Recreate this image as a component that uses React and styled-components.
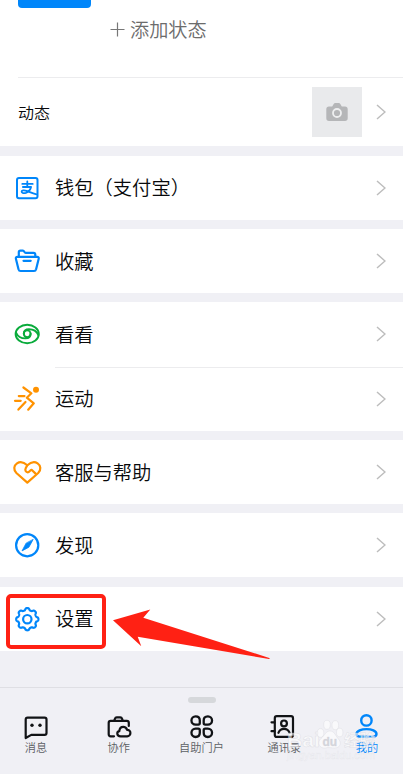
import React from 'react';
import styled, { createGlobalStyle } from 'styled-components';

const blue = '#0086fa';
const orange = '#ff9200';
const green = '#09ab3b';
const red = '#ff2114';
const ink = '#111316';
const grey = '#f0f0f5';

const GlobalStyle = createGlobalStyle`
    * {
        box-sizing: border-box;
    }
    body {
        margin: 0;
        background: ${grey};
        font-family: 'Noto Sans CJK SC', sans-serif;
        font-weight: 350;
        color: #08090b;
    }
`;

const Screen = styled.main`
    width: 403px;
    height: 774px;
    display: flex;
    flex-direction: column;
    overflow: hidden;
    background: ${grey};
`;

const Profile = styled.header`
    display: flex;
    flex: none;
    height: 77px;
    padding-left: 18px;
    background: white;
`;

const Avatar = styled.div`
    width: 73px;
    height: 8px;
    border-radius: 0 0 4px 4px;
    background: ${blue};
`;

const Status = styled.div`
    display: flex;
    align-items: center;
    gap: 5px;
    height: 28px;
    margin: 15px 0 0 19px;
    font-size: 19.2px;
    line-height: 28px;
    color: #6c6c6c;
`;

const Moments = styled.section`
    display: flex;
    flex: none;
    align-items: center;
    height: 69px;
    padding-left: 18px;
    background: linear-gradient(#ececee, #ececee) 18px 0 / 100% 1px no-repeat
        white;
    font-size: 16px;
`;

const Photo = styled.div`
    display: flex;
    align-items: center;
    justify-content: center;
    width: 50px;
    height: 50px;
    margin: 0 14px 0 auto;
    background: #e9eaec;
`;

const Groups = styled.div`
    display: flex;
    flex: 1;
    flex-direction: column;
    gap: 9.2px;
    padding-top: 9.6px;
`;

const Group = styled.section`
    background: white;
`;

const Row = styled.div`
    position: relative;
    display: flex;
    align-items: center;
    height: 64.2px;
    padding-left: 13px;
    font-size: 19.3px;

    & + &::before {
        content: '';
        position: absolute;
        top: 0;
        left: 55px;
        right: 0;
        border-top: 1px solid #ececee;
    }
`;

const RowLabel = styled.span`
    margin-left: 14px;
    margin-right: auto;
    padding-bottom: 1px;
    white-space: nowrap;
`;

const Icon = styled.svg.attrs({ viewBox: '0 0 28 28' })`
    display: block;
    flex: none;
    width: 28px;
    height: 28px;
    fill: none;
    stroke: ${p => p.$color};
    stroke-width: ${p => p.$weight || 2.2};
    stroke-linecap: round;
    stroke-linejoin: round;
    overflow: visible;
`;

const ChevronIcon = styled.svg`
    flex: none;
    width: 10px;
    height: 16px;
    margin-right: 17px;
    fill: none;
    stroke: #bdbdbd;
    stroke-width: 1.5;
`;

const Marker = styled.div`
    position: absolute;
    top: 7px;
    left: 6px;
    width: 100px;
    height: 55px;
    border: 4px solid ${red};
    border-radius: 5px;
`;

const Pointer = styled.svg`
    position: absolute;
    z-index: 1;
    top: 22px;
    left: 113px;
    width: 158px;
    height: 52px;
    fill: ${red};
`;

const TabBar = styled.nav`
    position: relative;
    flex: none;
    height: 87px;
    border-top: 1px solid #dfdfe4;
`;

const Grip = styled.div`
    width: 28px;
    height: 6px;
    margin: 9px auto 0;
    border-radius: 3px;
    background: #d6d8db;
`;

const Tabs = styled.div`
    display: flex;
    justify-content: space-between;
    padding: 10.2px 12px 0;
`;

const Tab = styled.div`
    display: flex;
    flex-direction: column;
    align-items: center;
    width: 48px;
    font-size: 11.2px;
    line-height: 13px;
    white-space: nowrap;
    color: ${p => (p.$active ? blue : '#5c5f64')};
`;

const Watermark = styled.svg`
    position: absolute;
    top: 29px;
    left: 283px;
    width: 96px;
    height: 50px;
    fill: white;
    fill-opacity: 0.6;
    stroke: #d0d1d8;
    stroke-opacity: 0.6;
    stroke-width: 0.5;
    font-family: 'Liberation Sans', 'Noto Sans CJK SC', sans-serif;
`;

const Chevron = () => (
    <ChevronIcon viewBox="0 0 10 16">
        <path d="M1 1l8 7-8 7" />
    </ChevronIcon>
);

// eight soft teeth round a circle
const gearPath = () => {
    const points = [];
    for (let i = 0; i < 160; i++) {
        const a = (i / 160) * Math.PI * 2;
        const wave = Math.cos(8 * a);
        const r = 10.1 + 1.05 * Math.tanh(1.7 * wave);
        points.push(
            `${(14.3 + r * Math.sin(a)).toFixed(2)} ${(
                14.2 -
                r * Math.cos(a)
            ).toFixed(2)}`
        );
    }
    return `M${points.join('L')}Z`;
};

const WalletIcon = () => (
    <Icon $color={blue} $weight={2}>
        <rect x="4" y="4" width="20.5" height="20.3" rx="2" />
        <path
            strokeWidth="1.8"
            d="M9.3 9.9h10.4M14.3 7.5v5.3M9.9 13h8.2c-.8 3-2.8 5-5.2 5.8-2 .6-4.2.3-4.3-1-.1-1.6 2.5-1.9 4.9-1 3.2 1.2 6 2.9 10 3.5"
        />
    </Icon>
);

const FolderIcon = () => (
    <Icon $color={blue}>
        <path d="M5.8 9.5V5.3c0-1.1.6-1.6 1.6-1.6h2.5c1.5 0 1.3 2.2 2.8 2.2h7.8c1.4 0 1.8.7 1.8 1.8v1.8" />
        <path d="M4.4 9.8h19.8c1.2 0 1.8.9 1.5 2l-2.6 10.5c-.3 1.1-1 1.7-2.1 1.7H7.6c-1.1 0-1.8-.6-2.1-1.7L2.9 11.8c-.3-1.1.3-2 1.5-2zM10.5 13.8h7.2" />
    </Icon>
);

const EyeIcon = () => (
    <Icon $color={green} $weight={1.9}>
        <ellipse cx="14.2" cy="14" rx="11.6" ry="9.3" />
        <circle cx="14.2" cy="13.8" r="3.4" />
        <path d="M3 12.6c1.8 4 5.6 5.8 9.4 5.8 3.4 0 5.2-1.8 5.2-4.6" />
        <path d="M25.4 15c-1.8-4-5.6-5.8-9.4-5.8-3.4 0-5.2 1.8-5.2 4.6" />
    </Icon>
);

const RunnerIcon = () => (
    <Icon $color={orange}>
        <circle cx="23" cy="4.8" r="3" fill={orange} stroke="none" />
        <path d="M10.4 2.5l8 5.8-4.6 4.4 7 5.6-5.6 6.4M12.5 17l-7.1 7.6M5.8 11.1h5.7M2 15.8h5.7" />
    </Icon>
);

const HeartIcon = () => (
    <Icon $color={orange}>
        <path d="M14.3 24.6L3.4 15C.2 11.8.8 7.5 4 5.3c3-2 6.8-1.3 10.3 2 3.5-3.3 7.3-4 10.3-2 3.2 2.2 3.8 6.5.6 9.7z" />
        <path d="M14.3 7.3l-1.6 3c-1 2 .2 4 2 4 1.8 0 2.2-2 3.9-2.5l4 3.8" />
    </Icon>
);

const CompassIcon = () => (
    <Icon $color={blue}>
        <circle cx="14.2" cy="14.2" r="11.1" />
        <path
            d="M20 8.7l-4.1 7.5-6.9 3.7 4-7.5z"
            fill={blue}
            strokeWidth="0.8"
        />
    </Icon>
);

const GearIcon = () => (
    <Icon $color={blue}>
        <path d={gearPath()} />
        <circle cx="14.3" cy="14.2" r="4.2" />
    </Icon>
);

const MessageIcon = () => (
    <Icon $color={ink}>
        <path d="M3.7 25V6.5c0-1.2.7-1.9 1.9-1.9h17c1.2 0 1.9.7 1.9 1.9V20c0 1.2-.7 1.9-1.9 1.9H9.3z" />
        <circle cx="10" cy="12.2" r="1.7" fill={ink} stroke="none" />
        <circle cx="18" cy="12.2" r="1.7" fill={ink} stroke="none" />
    </Icon>
);

const WorkIcon = () => (
    <Icon $color={ink}>
        <path d="M9.3 7.6l.6-1.8c.3-.9.9-1.4 1.8-1.4h3.6c.9 0 1.5.5 1.8 1.4l.6 1.8" />
        <path d="M9 23.3H5.7c-1.2 0-2-.8-2-2V9.8c0-1.2.8-2 2-2h16.1c1.2 0 2 .8 2 2V13" />
        <path d="M15.6 23.3c-4.2 0-4.1-4.6-1.3-5.2.3-2.8 1.9-4.2 3.9-4.2s3.3 1.1 3.9 3c2.1-.1 3.3 1.3 3.3 3s-1.4 3.4-3.2 3.4z" />
    </Icon>
);

const PortalIcon = () => (
    <Icon $color={ink} $weight={2.3}>
        <path d="M7.6 3.3c3.2 0 4.2 1.9 4.2 4.2v2.6c0 1-.5 1.5-1.5 1.5H7.6a4.15 4.15 0 0 1 0-8.3z" />
        <path d="M19.9 3.3c-3.2 0-4.2 1.9-4.2 4.2v2.6c0 1 .5 1.5 1.5 1.5h2.7a4.15 4.15 0 0 0 0-8.3z" />
        <path d="M7.6 24c3.2 0 4.2-1.9 4.2-4.2v-2.6c0-1-.5-1.5-1.5-1.5H7.6a4.15 4.15 0 0 0 0 8.3z" />
        <path d="M19.9 24c-3.2 0-4.2-1.9-4.2-4.2v-2.6c0-1 .5-1.5 1.5-1.5h2.7a4.15 4.15 0 0 1 0 8.3z" />
    </Icon>
);

const ContactsIcon = () => (
    <Icon $color={ink}>
        <rect x="4.8" y="3.2" width="18.2" height="20.7" rx="2" />
        <path d="M1.5 9.3h3M1.5 18.2h3M8.4 19.8c1-2.7 3-4 5.6-4s4.6 1.3 5.6 4" />
        <circle cx="14" cy="10.4" r="2.9" />
    </Icon>
);

const MeIcon = () => (
    <Icon $color={blue} $weight={2.4}>
        <circle cx="13.4" cy="7.4" r="5.2" />
        <path d="M13.5 16.1c-5 0-10 1.8-10 5 0 2 1.4 2.5 3.4 2.5h13.2c2 0 3.4-.5 3.4-2.5 0-3.2-5-5-10-5z" />
    </Icon>
);

const groups = [
    [{ label: '钱包（支付宝）', icon: WalletIcon }],
    [{ label: '收藏', icon: FolderIcon }],
    [
        { label: '看看', icon: EyeIcon },
        { label: '运动', icon: RunnerIcon },
    ],
    [{ label: '客服与帮助', icon: HeartIcon }],
    [{ label: '发现', icon: CompassIcon }],
    [{ label: '设置', icon: GearIcon, marked: true }],
];

const tabs = [
    { label: '消息', icon: MessageIcon },
    { label: '协作', icon: WorkIcon },
    { label: '自助门户', icon: PortalIcon },
    { label: '通讯录', icon: ContactsIcon },
    { label: '我的', icon: MeIcon, active: true },
];

const MenuRow = ({ label, icon: Glyph, marked }) => (
    <Row>
        <Glyph />
        <RowLabel>{label}</RowLabel>
        <Chevron />
        {marked && (
            <>
                <Marker />
                <Pointer viewBox="0 0 158 52">
                    <path d="M0 11.3L37.3 0.6 30.3 8.7 157 49.2 156 50 24.7 27.7 28.3 37.3z" />
                </Pointer>
            </>
        )}
    </Row>
);

export default function App() {
    return (
        <>
            <GlobalStyle />
            <Screen>
                <Profile>
                    <Avatar />
                    <Status>
                        <svg
                            width="15"
                            height="15"
                            fill="none"
                            stroke="#777"
                            strokeWidth="1.2"
                        >
                            <path d="M7.5 0.5v14M0.5 7.5h14" />
                        </svg>
                        添加状态
                    </Status>
                </Profile>
                <Moments>
                    动态
                    <Photo>
                        <svg width="22" height="20" viewBox="0 0 22 20">
                            <path
                                fill="#b5b6b8"
                                d="M3 4.5h3.2l1.5-2.4C8.2 1.3 8.7 1 9.6 1h2.8c.9 0 1.4.3 1.9 1.1l1.5 2.4H19c1.7 0 2.7 1 2.7 2.7v9c0 1.7-1 2.7-2.7 2.7H3c-1.7 0-2.7-1-2.7-2.7v-9c0-1.7 1-2.7 2.7-2.7z"
                            />
                            <circle
                                cx="11"
                                cy="11"
                                r="4"
                                fill="#b5b6b8"
                                stroke="#eeeff0"
                                strokeWidth="1.8"
                            />
                        </svg>
                    </Photo>
                    <Chevron />
                </Moments>
                <Groups>
                    {groups.map(rows => (
                        <Group key={rows[0].label}>
                            {rows.map(row => (
                                <MenuRow key={row.label} {...row} />
                            ))}
                        </Group>
                    ))}
                </Groups>
                <TabBar>
                    <Grip />
                    <Tabs>
                        {tabs.map(({ label, icon: Glyph, active }) => (
                            <Tab key={label} $active={active}>
                                <Glyph />
                                {label}
                            </Tab>
                        ))}
                    </Tabs>
                    <Watermark viewBox="0 0 96 50">
                        <text
                            x="4"
                            y="30"
                            fontSize="19.5"
                            fontWeight="700"
                            textLength="33"
                            lengthAdjust="spacingAndGlyphs"
                        >
                            Bai
                        </text>
                        <ellipse cx="37.5" cy="16" rx="3.3" ry="4.3" />
                        <ellipse cx="44" cy="7.8" rx="3.3" ry="4.5" />
                        <ellipse cx="52.3" cy="8.2" rx="3.3" ry="4.5" />
                        <ellipse cx="56.7" cy="15.5" rx="3.2" ry="4.3" />
                        <path d="M47 14c4.5 0 5.5 5 8 7.5 4.5 4.5 2 9.5-3.5 9.5-3 0-6-1-9 0-6 1-9-5.5-4.5-9.5 4-3 4.5-7.5 9-7.5z" />
                        <text
                            x="39.5"
                            y="29"
                            fontSize="12"
                            fontWeight="700"
                            fill="#d5d6dc"
                            fillOpacity="1"
                        >
                            du
                        </text>
                        <text x="61" y="29" fontSize="15.5" fontWeight="700">
                            经验
                        </text>
                        <text
                            x="4"
                            y="42"
                            fontSize="11"
                            fillOpacity="0.5"
                            strokeOpacity="0.35"
                            textLength="88"
                            lengthAdjust="spacingAndGlyphs"
                        >
                            jingyan.baidu.com
                        </text>
                    </Watermark>
                </TabBar>
            </Screen>
        </>
    );
}
